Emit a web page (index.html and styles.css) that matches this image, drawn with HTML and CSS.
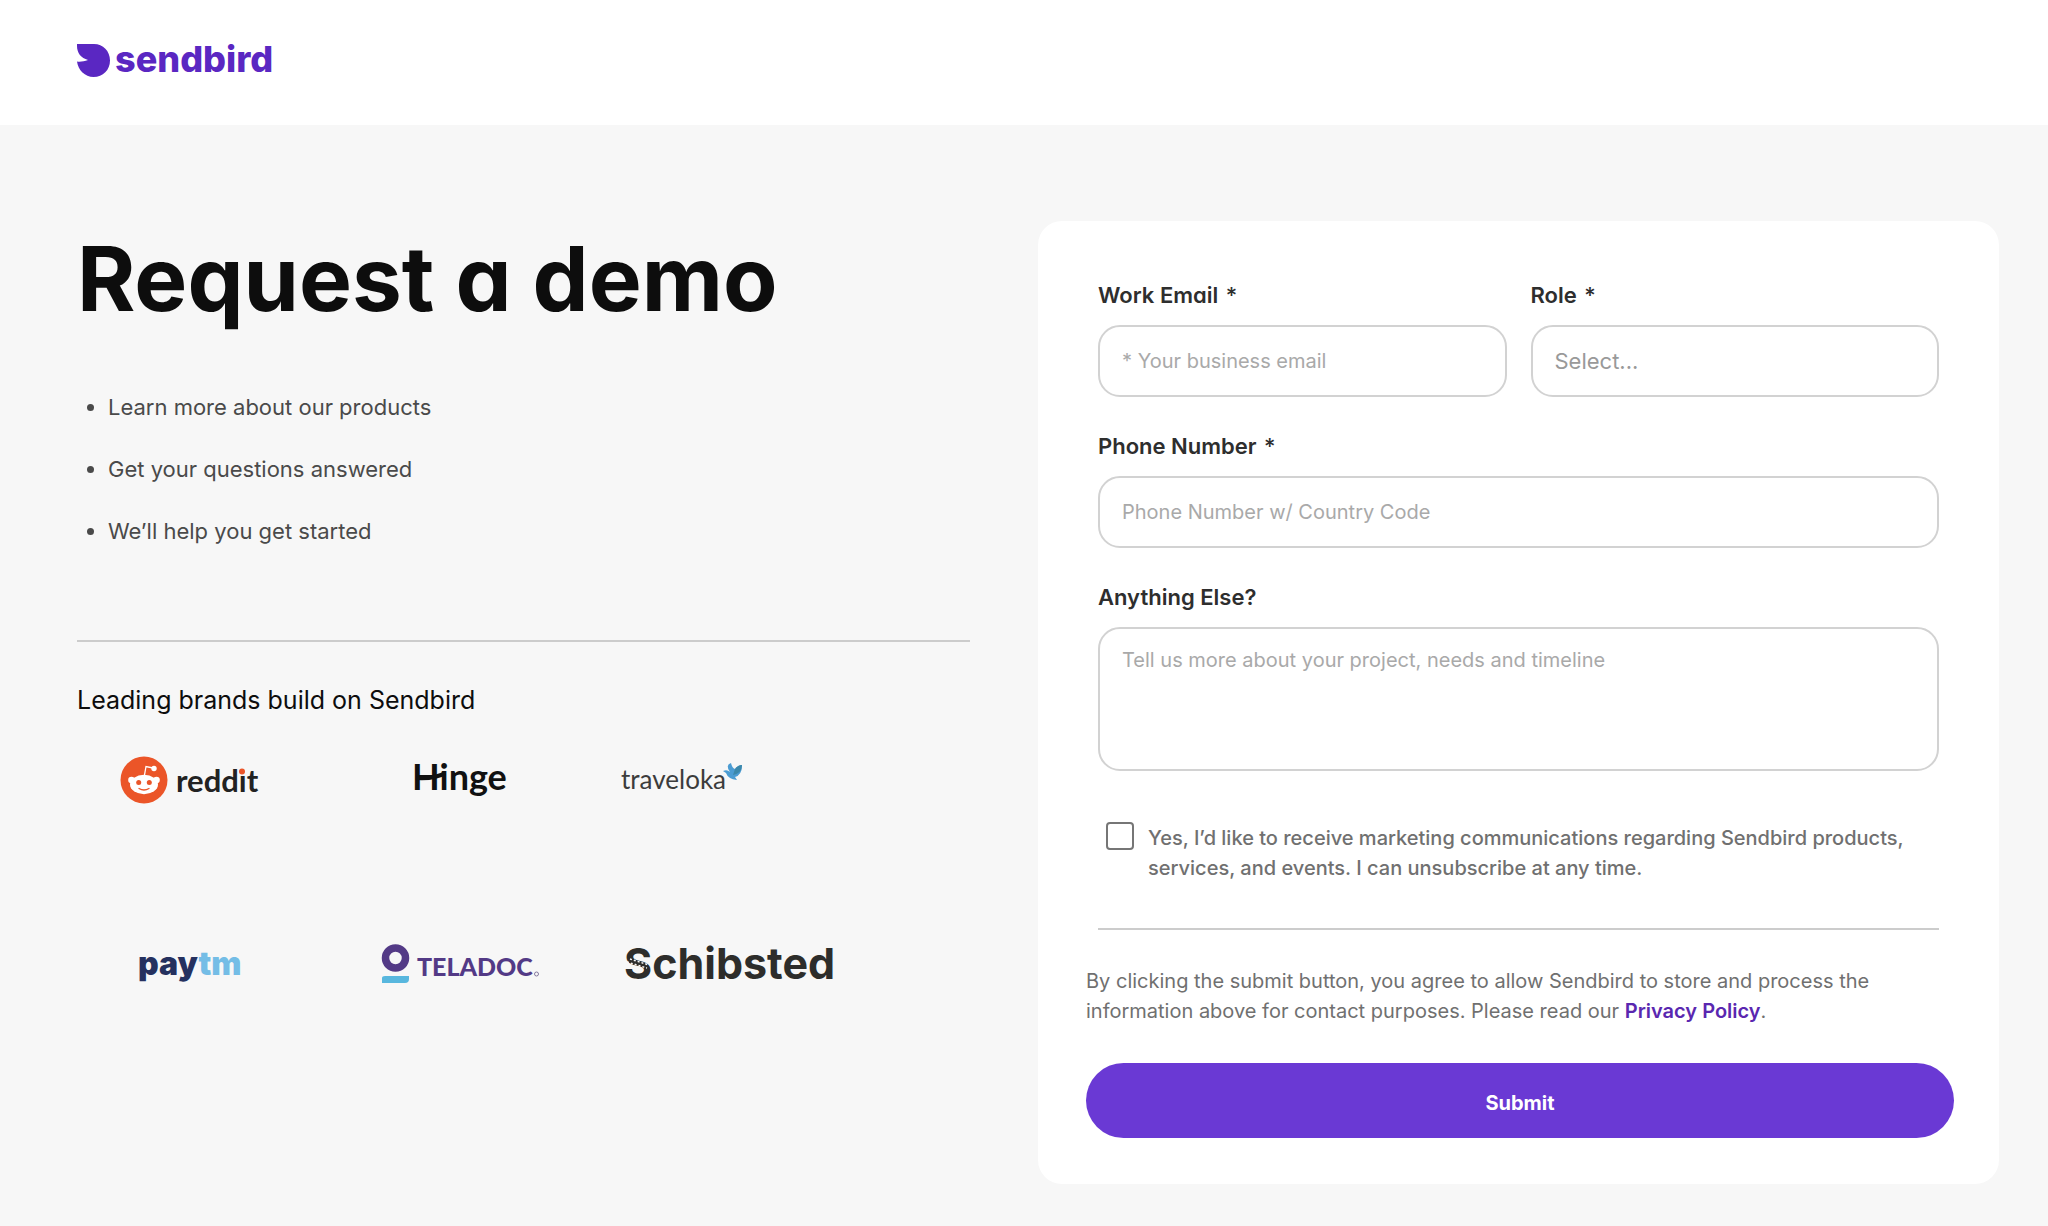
FILE: index.html
```html
<!DOCTYPE html>
<html lang="en">
<head>
<meta charset="utf-8">
<meta name="viewport" content="width=device-width, initial-scale=1">
<title>Request a demo | Sendbird</title>
<link rel="stylesheet" href="styles.css">
</head>
<body>
<header class="header">
  <a class="brand" href="#" aria-label="Sendbird home">
    <svg class="brand-mark" viewBox="0 0 33 34" aria-hidden="true"><path d="M0 0H17C26 0 33 7 33 16.500C33 26 26 33 16.500 33C8 33 1 26 0 17.500C3 18 7 17.500 11 16C4 14 0 9 0 2Z"/></svg>
    <span class="brand-name">sendbird</span>
  </a>
</header>
<main class="main">
  <section class="intro">
    <h1 class="title">Request a demo</h1>
    <ul class="benefits">
      <li>Learn more about our products</li>
      <li>Get your questions answered</li>
      <li>We’ll help you get started</li>
    </ul>
    <hr class="rule">
    <h2 class="subtitle">Leading brands build on Sendbird</h2>
    <div class="logos">
      <svg class="logo" width="138" height="48" viewBox="0 0 138 48" role="img" aria-label="reddit">
        <circle cx="24" cy="24" r="23.500" fill="#eb5528"/>
        <g fill="#fff">
          <circle cx="11.500" cy="24" r="3.300"/><circle cx="36.500" cy="24" r="3.300"/>
          <ellipse cx="24" cy="28.500" rx="14" ry="9.700"/><circle cx="34" cy="12.500" r="2.700"/>
        </g>
        <path d="M24.500 19L26 10.500L33 12" fill="none" stroke="#fff" stroke-width="1.300"/>
        <circle cx="18.700" cy="26.500" r="2.500" fill="#eb5528"/><circle cx="29.300" cy="26.500" r="2.500" fill="#eb5528"/>
        <path d="M19 32.500Q24 35.500 29 32.500" fill="none" stroke="#eb5528" stroke-width="1.300" stroke-linecap="round"/>
        <text class="logo-text logo-reddit" x="56" y="36">reddit</text>
        <rect x="118" y="9" width="8" height="9" fill="#f7f7f7"/><circle cx="122" cy="15.500" r="3" fill="#eb5528"/>
      </svg>
      <svg class="logo" width="94" height="44" viewBox="0 0 94 44" role="img" aria-label="Hinge">
        <text class="logo-text logo-hinge" x="-2" y="32">Hinge</text>
        <path d="M2 20Q22 21 31 15" fill="none" stroke="#111" stroke-width="4"/>
      </svg>
      <svg class="logo logo-start" width="124" height="40" viewBox="0 0 124 40" role="img" aria-label="traveloka">
        <text class="logo-text logo-traveloka" x="-1" y="29">traveloka</text>
        <path d="M101 11Q105 9 108 12Q103 5 109 3Q110 8 113 9Q116 5 120 5Q120 15 113 17L115 20Q106 19 104 13Z" fill="#4b9cd3"/>
        <path d="M113 9Q116 5 120 5Q120 13 111 15Z" fill="#3b88ab"/>
      </svg>
      <svg class="logo" width="104" height="44" viewBox="0 0 104 44" role="img" aria-label="paytm">
        <text class="logo-text logo-paytm" x="1" y="32"><tspan class="paytm-dark">pay</tspan><tspan class="paytm-light">tm</tspan></text>
      </svg>
      <svg class="logo" width="158" height="44" viewBox="0 0 158 44" role="img" aria-label="Teladoc">
        <circle cx="13.500" cy="15" r="10" fill="none" stroke="#533a86" stroke-width="7.500"/>
        <path d="M0 35Q0 33 3 33H27V36Q27 40 23 40H0Z" fill="#58b7de"/>
        <text class="logo-text logo-teladoc" x="35" y="33">TELADOC</text>
        <circle cx="154.500" cy="31" r="2" fill="none" stroke="#85799e"/>
      </svg>
      <svg class="logo logo-start" width="216" height="44" viewBox="0 0 216 44" role="img" aria-label="Schibsted">
        <text class="logo-text logo-schibsted" x="2" y="36">Schibsted</text>
        <path d="M5 19L25 25M4 22L23 28M8 16L27 22" stroke="#f7f7f7" stroke-width="1.500" stroke-dasharray="2 2"/>
      </svg>
    </div>
  </section>
  <form class="card">
    <div class="fields">
      <div class="field">
        <label class="label" for="email">Work Email <span class="required">*</span></label>
        <input class="control" id="email" type="email" placeholder="* Your business email">
      </div>
      <div class="field">
        <label class="label" for="role">Role <span class="required">*</span></label>
        <select class="control select" id="role"><option>Select...</option></select>
      </div>
      <div class="field field-wide">
        <label class="label" for="phone">Phone Number <span class="required">*</span></label>
        <input class="control" id="phone" type="tel" placeholder="Phone Number w/ Country Code">
      </div>
      <div class="field field-wide">
        <label class="label" for="message">Anything Else?</label>
        <textarea class="control message" id="message" placeholder="Tell us more about your project, needs and timeline"></textarea>
      </div>
    </div>
    <div class="consent">
      <input class="checkbox" id="consent" type="checkbox">
      <label class="consent-text" for="consent">Yes, I’d like to receive marketing communications regarding Sendbird products, services, and events. I can unsubscribe at any time.</label>
    </div>
    <hr class="rule form-rule">
    <div class="actions">
      <p class="legal">By clicking the submit button, you agree to allow Sendbird to store and process the information above for contact purposes. Please read our <a class="link" href="#">Privacy Policy</a>.</p>
      <button class="submit" type="submit">Submit</button>
    </div>
  </form>
</main>
</body>
</html>
```

FILE: styles.css
```css
* { box-sizing: border-box; }
body {
  margin: 0;
  min-height: 100vh;
  background: #f7f7f7;
  color: #0d0d0d;
  font-family: Inter, "Liberation Sans", sans-serif;
}
.header {
  display: flex;
  align-items: center;
  height: 125px;
  padding: 0 77px 4px;
  background: #fff;
}
.brand {
  display: flex;
  align-items: center;
  gap: 5px;
  color: #5a27c2;
  text-decoration: none;
}
.brand-mark { width: 33px; height: 34px; fill: currentColor; }
.brand-name {
  padding-bottom: 4px;
  font-size: 36px;
  line-height: 36px;
  font-weight: 800;
}
.main {
  display: grid;
  grid-template-columns: 893fr 961fr;
  gap: 68px;
  align-items: start;
  padding: 96px 49px 42px 77px;
}
.title {
  margin: 0;
  padding-top: 2px;
  font-size: 89px;
  line-height: 112px;
  font-weight: 700;
  font-feature-settings: "cv11";
}
.benefits {
  display: grid;
  gap: 26px;
  margin: 54px 0 91px;
  padding-left: 31px;
  color: #4a4a4a;
  font-size: 22px;
  line-height: 36px;
}
.rule {
  height: 2px;
  margin: 0;
  border: 0;
  background: #ccc;
}
.subtitle {
  margin: 40px 0 0;
  font-size: 25px;
  line-height: 36px;
  font-weight: 400;
}
.logos {
  display: grid;
  grid-template-columns: 25% 36% 39%;
  grid-template-rows: 124px 124px;
  row-gap: 61px;
  align-items: center;
  justify-items: center;
}
.logo { display: block; overflow: visible; }
.logo-start { justify-self: start; }
.logo-text { font-family: Lato, sans-serif; }
.logo-reddit { font-size: 31px; font-weight: 700; fill: #222; }
.logo-hinge { font-size: 36px; font-weight: 700; fill: #111; }
.logo-traveloka { font-size: 26px; font-weight: 400; fill: #3c3c3c; }
.logo-paytm { font-family: Inter, sans-serif; font-size: 32px; font-weight: 900; }
.paytm-dark { fill: #25315f; }
.paytm-light { fill: #74bde6; }
.logo-teladoc { font-size: 25px; font-weight: 900; fill: #533a86; }
.logo-schibsted { font-family: Inter, sans-serif; font-size: 43px; font-weight: 700; fill: #2d2d2b; }
.card {
  padding: 56px 60px 46px;
  border-radius: 24px;
  background: #fff;
}
.fields {
  display: grid;
  grid-template-columns: 1fr 1fr;
  gap: 31px 24px;
}
.field { display: grid; gap: 12px; }
.field-wide { grid-column: 1 / -1; }
.label {
  color: #2e2e2e;
  font-size: 22px;
  line-height: 36px;
  font-weight: 600;
  font-feature-settings: "cv11";
}
.required { margin-left: 2px; font-weight: 500; }
.control {
  width: 100%;
  height: 72px;
  padding: 0 22px;
  border: 2px solid #d2d2d2;
  border-radius: 22px;
  background: #fff;
  color: #2e2e2e;
  font: inherit;
  font-size: 20px;
}
.control::placeholder { color: #a9a9a9; opacity: 1; }
.select { appearance: none; color: #999; font-size: 22px; }
.message {
  display: block;
  height: 144px;
  padding: 17px 22px;
  line-height: 28px;
  resize: none;
}
.consent {
  display: flex;
  gap: 14px;
  margin-top: 51px;
  padding-left: 8px;
  color: #707070;
  font-size: 20px;
  line-height: 30px;
  font-weight: 500;
}
.consent-text { padding-top: 1px; }
.checkbox {
  flex: none;
  width: 28px;
  height: 28px;
  margin: 0;
  border: 2px solid #767676;
  border-radius: 4px;
  background: #fff;
  appearance: none;
}
.form-rule { margin-top: 45px; }
.actions { margin: 0 -15px 0 -12px; }
.legal {
  margin: 36px 0 37px;
  color: #707070;
  font-size: 20px;
  line-height: 30px;
}
.link { color: #5a27b0; font-weight: 600; text-decoration: none; }
.submit {
  display: block;
  width: 100%;
  height: 75px;
  padding: 4px 0 0;
  border: 0;
  border-radius: 38px;
  background: #6a39d4;
  color: #fff;
  font: inherit;
  font-size: 20px;
  font-weight: 700;
}
```
